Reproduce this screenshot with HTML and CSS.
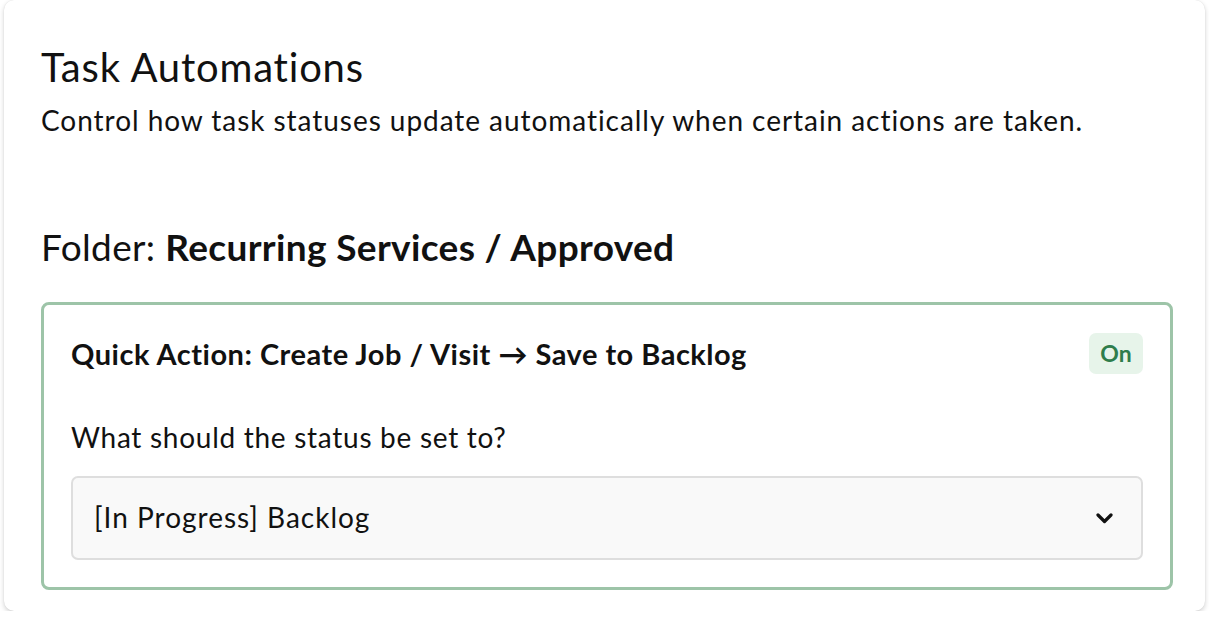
FILE: index.html
```html
<!DOCTYPE html>
<html>
<head>
<meta charset="utf-8">
<link rel="stylesheet" href="styles.css">
</head>
<body>
<div class="card">
  <h1 class="title">Task Automations</h1>
  <p class="subtitle">Control how task statuses update automatically when certain actions are taken.</p>
  <h2 class="folder">Folder: <strong>Recurring Services / Approved</strong></h2>
  <div class="rule">
    <div class="rule-head">
      <span class="rule-title">Quick Action: Create Job / Visit → Save to Backlog</span>
      <span class="badge">On</span>
    </div>
    <label class="label">What should the status be set to?</label>
    <div class="select">
      <span class="select-text">[In Progress] Backlog</span>
      <svg class="chev" width="17" height="11" viewBox="0 0 17 11"><polyline points="2,2 8.5,8.5 15,2" fill="none" stroke="#111" stroke-width="3.2" stroke-linecap="round" stroke-linejoin="round"/></svg>
    </div>
  </div>
</div>
</body>
</html>
```
FILE: styles.css
```css
* { box-sizing: border-box; }
html, body { margin: 0; padding: 0; background: #fff; }
body {
  font-family: Lato, "Noto Sans", sans-serif;
  color: #111;
  font-variant-ligatures: none;
}
.card {
  margin: 0 4px;
  height: 611px;
  background: #fff;
  border-radius: 10px;
  box-shadow: 0 2px 5px rgba(0,0,0,0.18), 0 0 1px rgba(0,0,0,0.12);
  padding: 43px 32px 0 37px;
  display: flex;
  flex-direction: column;
}
.title {
  margin: 0;
  font-size: 40px;
  font-weight: 400;
  line-height: 1.2;
  letter-spacing: 0.8px;
}
.subtitle {
  margin: 13px 0 0;
  font-size: 28px;
  line-height: 1.15;
  letter-spacing: 0.95px;
}
.folder {
  margin: 89px 0 0;
  font-size: 37px;
  font-weight: 400;
  line-height: 1.2;
  letter-spacing: 0.35px;
}
.folder strong { font-weight: 700; }
.rule {
  margin-top: 32px;
  border: 3px solid #9dc4a8;
  border-radius: 8px;
  padding: 29px 27px 27px 27px;
  display: flex;
  flex-direction: column;
}
.rule-head {
  display: flex;
  align-items: center;
  justify-content: space-between;
  margin-top: -1px;
}
.rule-title {
  font-size: 29px;
  font-weight: 700;
  line-height: 1.2;
  letter-spacing: 0.5px;
  padding-top: 2px;
}
.badge {
  width: 54px;
  height: 41px;
  border-radius: 7px;
  background: #e7f4ea;
  color: #2f7d4c;
  font-weight: 700;
  font-size: 23px;
  display: flex;
  align-items: center;
  justify-content: center;
}
.label {
  margin-top: 47px;
  font-size: 28px;
  line-height: 1.2;
  letter-spacing: 0.72px;
}
.select {
  margin-top: 22px;
  height: 84px;
  background: #f9f9f9;
  border: 2px solid #dedede;
  border-radius: 7px;
  display: flex;
  align-items: center;
  justify-content: space-between;
  padding: 0 28px 0 21px;
}
.select-text {
  font-size: 28px;
  line-height: 1.2;
  letter-spacing: 1px;
}
.chev { display: block; }
```
